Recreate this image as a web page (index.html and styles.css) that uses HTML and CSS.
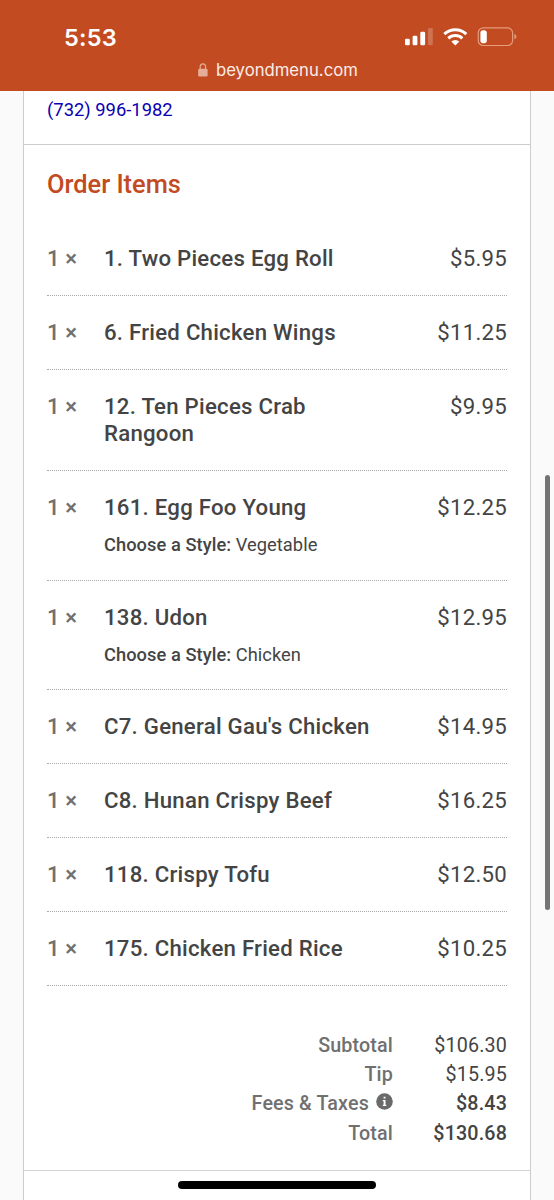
FILE: index.html
```html
<!DOCTYPE html>
<html lang="en">
<head>
<meta charset="utf-8">
<title>Order</title>
<link rel="stylesheet" href="styles.css">
</head>
<body>
<header class="topbar">
  <div class="status">
    <span class="clock">5:53</span>
    <svg class="status-icons" width="114" height="24" viewBox="0 0 114 24">
      <g fill="#fff">
        <rect x="1" y="13.8" width="4.8" height="6.4" rx="1.3"/>
        <rect x="8.6" y="10.8" width="4.8" height="9.4" rx="1.3"/>
        <rect x="16.3" y="6.8" width="4.8" height="13.4" rx="1.3"/>
        <rect x="24" y="3" width="4.8" height="17.2" rx="1.3" opacity=".22"/>
      </g>
      <g fill="none" stroke="#fff" stroke-width="3">
        <path d="M40.3 9.2A16 16 0 0 1 62.3 9.2"/>
        <path d="M44.3 13.3A10.2 10.2 0 0 1 58.3 13.3"/>
      </g>
      <path d="M47.3 16.5a5.9 5.9 0 0 1 8 0L51.3 20.6z" fill="#fff"/>
      <rect x="74.2" y="2.9" width="34.4" height="17.6" rx="5" fill="none" stroke="#e39b7b" stroke-width="1.2"/>
      <rect x="76.4" y="5.2" width="6.4" height="13" rx="2.6" fill="#fff"/>
      <path d="M110.4 8.9q2 .8 2 2.7t-2 2.7z" fill="#e29c7c"/>
    </svg>
  </div>
  <div class="address">
    <svg width="10" height="14" viewBox="0 0 10 14">
      <rect x=".2" y="5.8" width="9.4" height="7.8" rx="1.4" fill="#e6ae98"/>
      <path d="M2.2 6.3V3.8a2.7 2.9 0 0 1 5.4 0v2.5" fill="none" stroke="#e6ae98" stroke-width="1.2"/>
    </svg>
    <span>beyondmenu.com</span>
  </div>
</header>
<main class="card">
  <section class="contact"><a class="phone" href="#">(732) 996-1982</a></section>
  <section class="order">
    <h2 class="title">Order Items</h2>
    <ul class="items">
      <li class="item"><span class="qty">1 <b>×</b></span><div class="name">1. Two Pieces Egg Roll</div><span class="price">$5.95</span></li>
      <li class="item"><span class="qty">1 <b>×</b></span><div class="name">6. Fried Chicken Wings</div><span class="price">$11.25</span></li>
      <li class="item"><span class="qty">1 <b>×</b></span><div class="name">12. Ten Pieces Crab Rangoon</div><span class="price">$9.95</span></li>
      <li class="item"><span class="qty">1 <b>×</b></span><div class="name">161. Egg Foo Young<p class="option"><b>Choose a Style:</b> Vegetable</p></div><span class="price">$12.25</span></li>
      <li class="item"><span class="qty">1 <b>×</b></span><div class="name">138. Udon<p class="option"><b>Choose a Style:</b> Chicken</p></div><span class="price">$12.95</span></li>
      <li class="item"><span class="qty">1 <b>×</b></span><div class="name">C7. General Gau's Chicken</div><span class="price">$14.95</span></li>
      <li class="item"><span class="qty">1 <b>×</b></span><div class="name">C8. Hunan Crispy Beef</div><span class="price">$16.25</span></li>
      <li class="item"><span class="qty">1 <b>×</b></span><div class="name">118. Crispy Tofu</div><span class="price">$12.50</span></li>
      <li class="item"><span class="qty">1 <b>×</b></span><div class="name">175. Chicken Fried Rice</div><span class="price">$10.25</span></li>
    </ul>
    <dl class="totals">
      <dt>Subtotal</dt><dd>$106.30</dd>
      <dt>Tip</dt><dd>$15.95</dd>
      <dt>Fees &amp; Taxes
        <svg class="info" width="17" height="17" viewBox="0 0 17 17"><circle cx="8.5" cy="8.5" r="8.3" fill="#6a6a6a"/><path d="M7.6 3.7h1.9v1.9H7.6zM6.8 7h2.7v4.8h.8v1.2H6.8v-1.2h.8V8.2h-.8z" fill="#fff"/></svg></dt><dd class="strong">$8.43</dd>
      <dt>Total</dt><dd class="strong">$130.68</dd>
    </dl>
  </section>
</main>
<div class="scrollbar"></div>
<div class="home-indicator"></div>
</body>
</html>
```
FILE: styles.css
```css
* { box-sizing: border-box; }
body {
  margin: 0;
  height: 1200px;
  display: flex;
  flex-direction: column;
  position: relative;
  overflow: hidden;
  background: #fafafa;
  color: #444;
  font-family: Roboto, sans-serif;
}
.topbar {
  flex: none;
  height: 91px;
  background: #c24b22;
  color: #fff;
  font-family: Inter, sans-serif;
}
.status {
  display: flex;
  justify-content: space-between;
  padding: 25px 36px 0 64px;
  height: 60px;
}
.clock { font-size: 23.5px; font-weight: 600; line-height: 25px; letter-spacing: .2px; }
.address {
  display: flex;
  align-items: center;
  padding-left: 198px;
  gap: 8px;
  height: 19px;
  font-size: 16.7px;
  color: #fdeee7;
}
.card {
  flex: 1;
  margin: 0 23px;
  border: solid #ccc;
  border-width: 0 1px;
  background: #fff;
}
.contact {
  height: 54px;
  padding: 7px 23px 0;
  border-bottom: 1px solid #ccc;
}
.phone { display: block; font-size: 18.4px; line-height: 23px; color: #0a00b4; text-decoration: none; }
.order {
  height: 1026px;
  padding: 24px 23px 0;
  border-bottom: 1px solid #d4d4d4;
}
.title { margin: 0; height: 53px; font-size: 25.4px; font-weight: 500; line-height: 31px; color: #c24b22; }
.items { list-style: none; margin: 0; padding: 0; }
.item {
  display: grid;
  grid-template-columns: 57px 280px 1fr;
  padding: 23px 0;
  border-bottom: 1px dotted #aaa;
  font-size: 22.2px;
  line-height: 27px;
}
.qty { color: #707070; font-weight: 500; }
.qty b { font-weight: 500; }
.name { font-weight: 500; letter-spacing: .25px; }
.option { margin: 12px 0 0; font-size: 18.3px; font-weight: 400; line-height: 23.5px; letter-spacing: .05px; }
.option b { font-weight: 500; }
.price { text-align: right; letter-spacing: .25px; }
.totals {
  display: grid;
  grid-template-columns: 346px 1fr;
  grid-auto-rows: 29.2px;
  margin: 45px 0 0;
  font-size: 19.7px;
  line-height: 29px;
  text-align: right;
}
.totals dt { color: #707070; font-weight: 500; letter-spacing: .15px; }
.totals dd { margin: 0; letter-spacing: .15px; }
.totals .strong { font-weight: 500; }
.info { margin-left: 2px; vertical-align: 0; }
.scrollbar {
  position: absolute;
  top: 475px;
  right: 4px;
  width: 5px;
  height: 435px;
  border-radius: 3px;
  background: #747474;
}
.home-indicator {
  position: absolute;
  top: 1181px;
  left: 178px;
  width: 198px;
  height: 8px;
  border-radius: 4px;
  background: #000;
}
```
